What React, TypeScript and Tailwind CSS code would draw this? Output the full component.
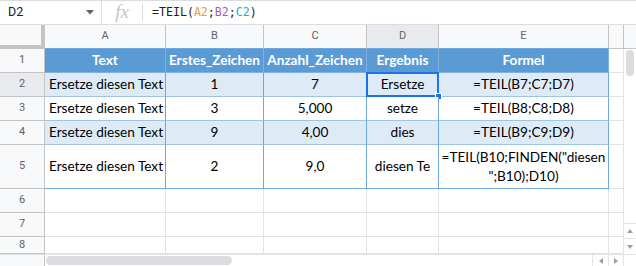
import React from "react";

const W = {
  hdr: "w-[45px]",
  A: "w-[121px]",
  B: "w-[98px]",
  C: "w-[103px]",
  D: "w-[72px]",
  E: "w-[170px]",
  F: "w-[14px]",
};

const cellFont = "font-['Lato','Open_Sans',sans-serif] text-[13.6px] text-black";

function RowHeader({ n, h, selected }: { n: string; h: string; selected?: boolean }) {
  return (
    <div
      className={`${W.hdr} ${h} shrink-0 box-border border-r border-b border-[#c4c4c4] flex items-center justify-center text-[11px] text-[#5f6368] font-['Roboto',sans-serif] ${
        selected ? "bg-[#e8eaed]" : "bg-[#f8f9fa]"
      }`}
    >
      {n}
    </div>
  );
}

type RowData = { a: string; b: string; c: string; d: string; e: React.ReactNode };

const rows: RowData[] = [
  { a: "Ersetze diesen Text", b: "1", c: "7", d: "Ersetze", e: "=TEIL(B7;C7;D7)" },
  { a: "Ersetze diesen Text", b: "3", c: "5,000", d: "setze", e: "=TEIL(B8;C8;D8)" },
  { a: "Ersetze diesen Text", b: "9", c: "4,00", d: "dies", e: "=TEIL(B9;C9;D9)" },
  {
    a: "Ersetze diesen Text",
    b: "2",
    c: "9,0",
    d: "diesen Te",
    e: (
      <>
        =TEIL(B10;FINDEN("diesen
        <br />
        ";B10);D10)
      </>
    ),
  },
];

export default function App() {
  return (
    <div className="w-[636px] h-[266px] overflow-hidden bg-white flex flex-col font-['Roboto',sans-serif]">
      {/* formula bar */}
      <div className="h-[25px] shrink-0 box-border border-t border-b border-[#dadce0] flex items-center">
        <div className="w-[102px] h-full flex items-center justify-between pl-[8px] pr-[7px] border-r border-[#e0e0e0]">
          <span className="text-[12.5px] text-[#202124]">D2</span>
          <svg width="8" height="5" viewBox="0 0 8 5">
            <path d="M0 0 L8 0 L4 4.5 Z" fill="#5f6368" />
          </svg>
        </div>
        <div className="w-[41px] h-[17px] flex items-center justify-center border-r border-[#dadce0]">
          <span className="font-['Liberation_Serif',serif] italic text-[19px] leading-none text-[#c4c7c5] -mt-[2px]">fx</span>
        </div>
        <div className="pl-[9px] font-['DejaVu_Sans_Mono',monospace] text-[11.6px] text-[#202124]">
          =TEIL(<span className="text-[#f09c3a]">A2</span>;<span className="text-[#a25fb8]">B2</span>;<span className="text-[#2aa7d8]">C2</span>)
        </div>
      </div>

      <div className="flex flex-1 min-h-0">
        {/* grid */}
        <div className="w-[623px] flex flex-col">
          {/* column headers */}
          <div className="flex h-[24px] shrink-0 text-[11px] text-[#5f6368]">
            <div className={`${W.hdr} h-full box-border bg-[#f8f9fa] border-r-[4px] border-b-[4px] border-[#c4c4c4]`} />
            <div className={`${W.A} h-full box-border bg-[#f8f9fa] border-r border-[#c4c4c4] border-b border-b-[#6fa8dc] flex items-center justify-center`}>A</div>
            <div className={`${W.B} h-full box-border bg-[#f8f9fa] border-r border-[#c4c4c4] border-b border-b-[#6fa8dc] flex items-center justify-center`}>B</div>
            <div className={`${W.C} h-full box-border bg-[#f8f9fa] border-r border-[#c4c4c4] border-b border-b-[#6fa8dc] flex items-center justify-center`}>C</div>
            <div className={`${W.D} h-full box-border bg-[#e8eaed] border-r border-[#c4c4c4] border-b border-b-[#6fa8dc] flex items-center justify-center`}>D</div>
            <div className={`${W.E} h-full box-border bg-[#f8f9fa] border-r border-[#c4c4c4] border-b border-b-[#6fa8dc] flex items-center justify-center`}>E</div>
            <div className={`${W.F} h-full box-border bg-[#f8f9fa] border-b border-[#c4c4c4]`} />
          </div>

          {/* row 1 header band */}
          <div className="flex h-[24px] shrink-0">
            <RowHeader n="1" h="h-full" />
            {[
              [W.A, "Text"],
              [W.B, "Erstes_Zeichen"],
              [W.C, "Anzahl_Zeichen"],
              [W.D, "Ergebnis"],
              [W.E, "Formel"],
            ].map(([w, t]) => (
              <div
                key={t}
                className={`${w} h-full box-border bg-[#5b9bd5] border-r border-b border-[#7eb0e0] flex items-center justify-center font-['Lato','Open_Sans',sans-serif] font-bold text-[13.6px] text-white whitespace-nowrap`}
              >
                {t}
              </div>
            ))}
            <div className={`${W.F} h-full box-border border-b border-[#e2e3e3]`} />
          </div>

          {rows.map((r, i) => {
            const n = i + 2;
            const tall = n === 5;
            const h = tall ? "h-[44px]" : "h-[24px]";
            const bg = n % 2 === 0 ? "bg-[#ddebf7]" : "bg-white";
            const bb = n === 5 ? "border-b-[#6fa8dc]" : "border-b-[#9dc3e6]";
            const base = `h-full box-border border-r border-r-[#6fa8dc] border-b ${bb} ${bg} ${cellFont} flex items-center`;
            return (
              <div key={n} className={`flex ${h} shrink-0`}>
                <RowHeader n={String(n)} h="h-full" selected={n === 2} />
                <div className={`${W.A} ${base} pl-[4px] whitespace-nowrap`}>{r.a}</div>
                <div className={`${W.B} ${base} justify-center`}>{r.b}</div>
                <div className={`${W.C} ${base} justify-center`}>{r.c}</div>
                <div className={`${W.D} ${base} justify-center relative whitespace-nowrap`}>
                  {r.d}
                  {n === 2 && (
                    <>
                      <div className="absolute -left-[1px] -top-[1px] w-[73px] h-[25px] border-2 border-[#1a73e8]" />
                      <div className="absolute -right-[4px] -bottom-[4px] w-[7px] h-[7px] bg-[#1a73e8] border border-white" />
                    </>
                  )}
                </div>
                <div className={`${W.E} ${base} justify-center text-center leading-[19px] whitespace-nowrap`}>{r.e}</div>
                <div className={`${W.F} h-full box-border border-b border-[#e2e3e3]`} />
              </div>
            );
          })}

          {[6, 7, 8].map((n) => {
            const h = n === 8 ? "h-[17px]" : "h-[24px]";
            const c = "h-full box-border border-r border-b border-[#e2e3e3]";
            return (
              <div key={n} className={`flex ${h} shrink-0`}>
                <RowHeader n={String(n)} h="h-full" />
                <div className={`${W.A} ${c}`} />
                <div className={`${W.B} ${c}`} />
                <div className={`${W.C} ${c}`} />
                <div className={`${W.D} ${c}`} />
                <div className={`${W.E} ${c}`} />
                <div className={`${W.F} h-full box-border border-b border-[#e2e3e3]`} />
              </div>
            );
          })}
        </div>

        {/* vertical scrollbar column */}
        <div className="w-[13px] flex flex-col">
          <div className="h-[24px] shrink-0 box-border bg-[#f8f9fa] border-l border-b border-[#c4c4c4]" />
          <div className="flex-1 box-border border-l border-[#e2e3e3] relative">
            <div className="absolute left-[2px] top-[1px] w-[8px] h-[26px] rounded-full bg-[#dadce0]" />
          </div>
          <div className="h-[15px] shrink-0 box-border border-l border-t border-[#e2e3e3] flex items-center justify-center">
            <svg width="6" height="4" viewBox="0 0 6 4">
              <path d="M0 4 L3 0 L6 4 Z" fill="#9aa0a6" />
            </svg>
          </div>
          <div className="h-[16px] shrink-0 box-border border-l border-t border-[#e2e3e3] flex items-center justify-center">
            <svg width="6" height="4" viewBox="0 0 6 4">
              <path d="M0 0 L3 4 L6 0 Z" fill="#9aa0a6" />
            </svg>
          </div>
        </div>
      </div>

      {/* horizontal scrollbar */}
      <div className="h-[12px] shrink-0 flex box-border border-t border-[#e2e3e3]">
        <div className="w-[45px] h-full box-border bg-[#f8f9fa] border-r border-[#c4c4c4]" />
        <div className="w-[547px] h-full relative">
          <div className="absolute left-[1px] top-[1px] w-[186px] h-[9px] rounded-full bg-[#dadce0]" />
        </div>
        <div className="w-[16px] h-full box-border border-l border-[#e2e3e3] flex items-center justify-center">
          <svg width="4" height="6" viewBox="0 0 4 6">
            <path d="M4 0 L0 3 L4 6 Z" fill="#9aa0a6" />
          </svg>
        </div>
        <div className="w-[15px] h-full box-border border-l border-[#e2e3e3] flex items-center justify-center">
          <svg width="4" height="6" viewBox="0 0 4 6">
            <path d="M0 0 L4 3 L0 6 Z" fill="#9aa0a6" />
          </svg>
        </div>
        <div className="w-[13px] h-full box-border border-l border-[#e2e3e3]" />
      </div>
    </div>
  );
}
